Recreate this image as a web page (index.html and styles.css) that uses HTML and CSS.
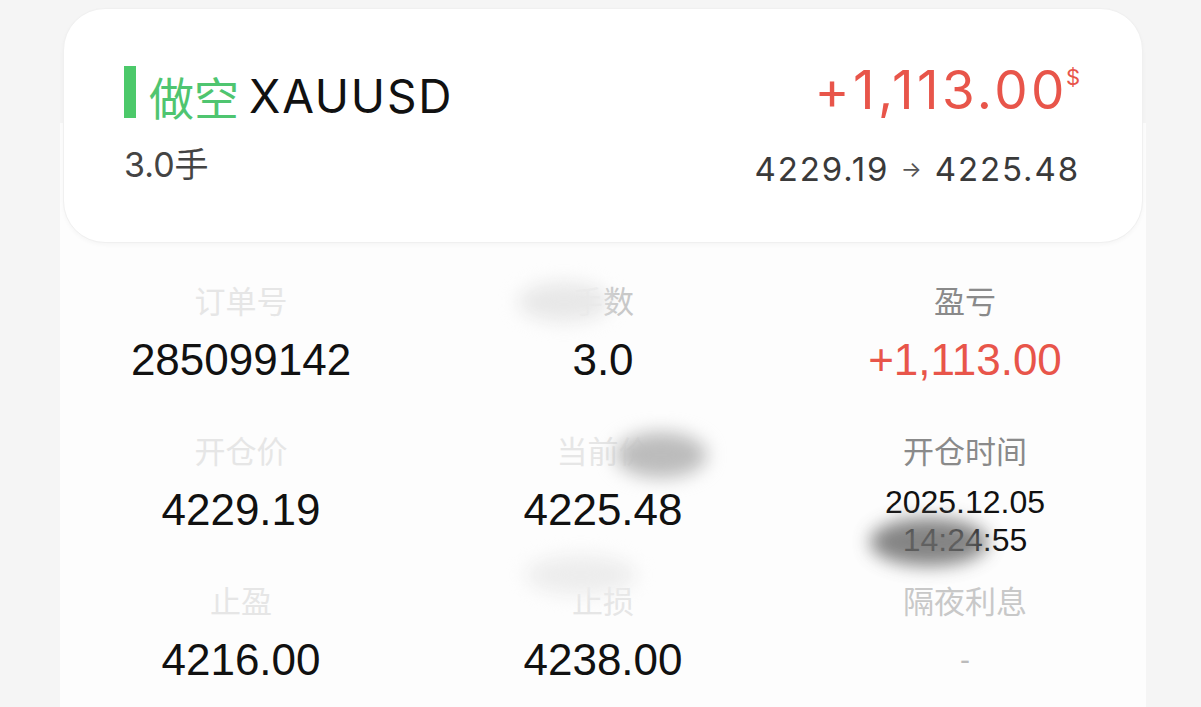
FILE: index.html
```html
<!DOCTYPE html>
<html lang="zh-CN">

<head>
    <meta charset="UTF-8">
    <meta name="viewport" content="width=device-width, initial-scale=1.0">
    <title>持仓详情</title>
    <link rel="stylesheet" href="styles.css">
</head>

<body>
    <div class="page">
        <div class="summary-card">
            <div class="summary-left">
                <div class="symbol-row">
                    <span class="side-bar"></span>
                    <span class="side">做空</span>
                    <span class="symbol">XAUUSD</span>
                </div>
                <div class="lots">3.0手</div>
            </div>
            <div class="summary-right">
                <div class="profit">+1,113.00<sup>$</sup></div>
                <div class="price-move">4229.19 <span class="arrow">→</span> 4225.48</div>
            </div>
        </div>

        <div class="details">
            <div class="detail-grid">
                <div class="cell">
                    <div class="label faint">订单号</div>
                    <div class="value">285099142</div>
                </div>
                <div class="cell">
                    <div class="label faint-mid"><span class="masked">手</span>数</div>
                    <div class="value">3.0</div>
                </div>
                <div class="cell">
                    <div class="label">盈亏</div>
                    <div class="value red">+1,113.00</div>
                </div>

                <div class="cell">
                    <div class="label faint">开仓价</div>
                    <div class="value">4229.19</div>
                </div>
                <div class="cell">
                    <div class="label faint">当前<span class="masked">价</span></div>
                    <div class="value">4225.48</div>
                </div>
                <div class="cell">
                    <div class="label">开仓时间</div>
                    <div class="value small">2025.12.05<br>14:24:55</div>
                </div>

                <div class="cell">
                    <div class="label faint">止盈</div>
                    <div class="value">4216.00</div>
                </div>
                <div class="cell">
                    <div class="label faint">止损</div>
                    <div class="value">4238.00</div>
                </div>
                <div class="cell">
                    <div class="label faint-mid">隔夜利息</div>
                    <div class="value dash">-</div>
                </div>
            </div>

            <!-- smudges left over from redaction -->
            <span class="smudge smudge-lots"></span>
            <span class="smudge smudge-price"></span>
            <span class="smudge smudge-time"></span>
            <span class="smudge smudge-sl"></span>
        </div>
    </div>
</body>

</html>
```

FILE: styles.css
```css
body {
    margin: 0;
    padding: 0;
    background-color: #f5f5f5;
    font-family: "Liberation Sans", "Noto Sans CJK SC", sans-serif;
    height: 707px;
    overflow: hidden;
}

.page {
    width: 1086px;
    margin-left: 60px;
    height: 707px;
    display: flex;
    flex-direction: column;
}

.summary-card {
    position: relative;
    z-index: 1;
    flex-shrink: 0;
    margin: 8px 3px 0;
    height: 235px;
    box-sizing: border-box;
    padding: 52px 62px 0 60px;
    background-color: #fff;
    border: 1px solid #f0f0f0;
    border-radius: 42px;
    box-shadow: 0 2px 4px rgba(0, 0, 0, 0.03);
    display: flex;
    justify-content: space-between;
    align-items: flex-start;
    font-family: Inter, "Noto Sans CJK SC", sans-serif;
}

.symbol-row {
    display: flex;
    align-items: center;
    height: 70px;
}

.side-bar {
    width: 12px;
    height: 52px;
    background-color: #4cc96a;
    margin-right: 13px;
    margin-bottom: 8px;
}

.side {
    font-family: "Noto Sans CJK SC", sans-serif;
    font-size: 45px;
    color: #4fc570;
    margin-right: 10px;
}

.symbol {
    font-size: 46px;
    color: #111;
    letter-spacing: 1.8px;
}

.lots {
    margin-top: 14px;
    font-size: 34px;
    line-height: 40px;
    color: #444;
}

.summary-right {
    margin-top: -22px;
    text-align: right;
}

.profit {
    font-size: 53px;
    color: #e8554a;
    line-height: 76px;
    letter-spacing: 3.4px;
}

.profit sup {
    font-size: 22px;
    vertical-align: 24px;
    letter-spacing: 0;
    margin-left: -2px;
}

.price-move {
    margin-top: 21px;
    font-size: 33px;
    line-height: 40px;
    color: #3a3a3a;
    letter-spacing: 1.9px;
}

.arrow {
    font-size: 22px;
    vertical-align: 4px;
    color: #555;
}

.details {
    position: relative;
    flex: 1;
    margin-top: -120px;
    padding-top: 157px;
    background-color: #fdfdfd;
}

.detail-grid {
    display: grid;
    grid-template-columns: repeat(3, 1fr);
    grid-auto-rows: 150px;
    text-align: center;
}

.label {
    font-family: "Noto Sans CJK SC", sans-serif;
    font-size: 31px;
    line-height: 40px;
    color: #8a8a8a;
}

.label.faint {
    color: #e6e6e6;
}

.label.faint-mid {
    color: #c8c8c8;
}

.label .masked {
    color: #f0f0f0;
}

.value {
    margin-top: 13px;
    font-size: 44px;
    line-height: 54px;
    color: #111;
}

.value.red {
    color: #e8554a;
}

.value.small {
    font-size: 32px;
    line-height: 38px;
}

.value.dash {
    color: #bbb;
    font-size: 30px;
}

.smudge {
    position: absolute;
    border-radius: 50%;
    filter: blur(9px);
}

.smudge-lots {
    left: 458px;
    top: 159px;
    width: 92px;
    height: 40px;
    background-color: #e8e8e8;
}

.smudge-price {
    left: 555px;
    top: 309px;
    width: 92px;
    height: 46px;
    background-color: #bcbcbc;
}

.smudge-time {
    left: 810px;
    top: 395px;
    width: 118px;
    height: 48px;
    background-color: #6f6f6f;
    opacity: 0.85;
}

.smudge-sl {
    left: 466px;
    top: 432px;
    width: 110px;
    height: 40px;
    background-color: #ededed;
}
```
